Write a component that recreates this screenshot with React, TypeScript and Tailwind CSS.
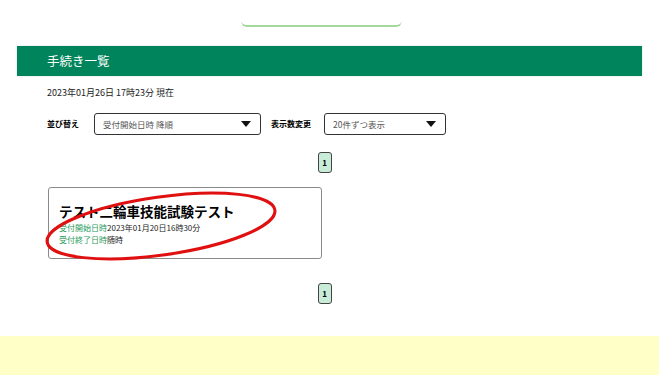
const Caret = () => (
  <svg width="10" height="6" viewBox="0 0 10 6" className="shrink-0">
    <path d="M0 0 H10 L5 6 Z" fill="#111" />
  </svg>
);

const Select = ({ label, width, text, gap }: { label: string; width: string; text: string; gap: string }) => (
  <div className="flex items-center">
    <span className="text-[8px] font-bold text-black">{label}</span>
    <div
      className={`${gap} flex h-[22px] ${width} items-center justify-between rounded-[3px] border border-[#333] pl-[8px] pr-[9px]`}
    >
      <span className="text-[8.5px] text-[#555]">{text}</span>
      <Caret />
    </div>
  </div>
);

const Pager = ({ mt }: { mt: string }) => (
  <div className={`${mt} flex justify-center pr-[10px]`}>
    <div className="flex h-[21px] w-[14px] items-center justify-center rounded-[3px] border border-[#444] bg-[#c8ecd8] text-[8px] font-bold text-black">
      1
    </div>
  </div>
);

export default function App() {
  return (
    <div
      className="relative w-[659px] min-h-[383px] overflow-hidden bg-white"
      style={{ fontFamily: '"Noto Sans CJK JP", "Noto Sans", sans-serif' }}
    >
      {/* top button, mostly scrolled off */}
      <div className="flex h-[46px] items-start">
        <div className="ml-[241px] mt-[-14px] h-[41px] w-[161px] rounded-b-[6px] border-b-2 border-[#a3d99a]" />
      </div>

      <div className="mx-[17px] flex h-[30px] items-center bg-[#00845c] pl-[30px] shadow-[0_0_2px_rgba(0,0,0,0.15)]">
        <h1 className="text-[12.5px] text-white">手続き一覧</h1>
      </div>

      <div className="ml-[47px] mt-[11px] h-[12px] text-[9px] leading-[12px] text-[#222]">
        2023年01月26日 17時23分 現在
      </div>

      <div className="ml-[47px] mt-[14px] flex items-center gap-[10px]">
        <Select label="並び替え" gap="ml-[15px]" width="w-[167px]" text="受付開始日時 降順" />
        <Select label="表示数変更" gap="ml-[13px]" width="w-[122px]" text="20件ずつ表示" />
      </div>

      <Pager mt="mt-[17px]" />

      <div className="relative ml-[48px] mt-[14px] h-[72px] w-[274px] rounded-[3px] border border-[#8a8a8a] pl-[10px] pt-[14px]">
        <div className="text-[13.5px] font-bold leading-[18px] text-black">テスト二輪車技能試験テスト</div>
        <div className="mt-[2px] text-[8px] leading-[12px] text-[#222]">
          <span className="text-[#1f9a5c]">受付開始日時</span>2023年01月20日16時30分
        </div>
        <div className="text-[8px] leading-[12px] text-[#222]">
          <span className="text-[#1f9a5c]">受付終了日時</span>随時
        </div>
        {/* red annotation ring */}
        <svg className="pointer-events-none absolute left-[-6px] top-0" width="240" height="76" viewBox="0 0 240 76">
          <ellipse cx="118" cy="38" rx="115" ry="29" transform="rotate(-8 118 38)" fill="none" stroke="#e01010" strokeWidth="3" />
        </svg>
      </div>

      <Pager mt="mt-[24px]" />

      <div className="mt-[32px] h-[39px] bg-[#ffffc8]" />
    </div>
  );
}
